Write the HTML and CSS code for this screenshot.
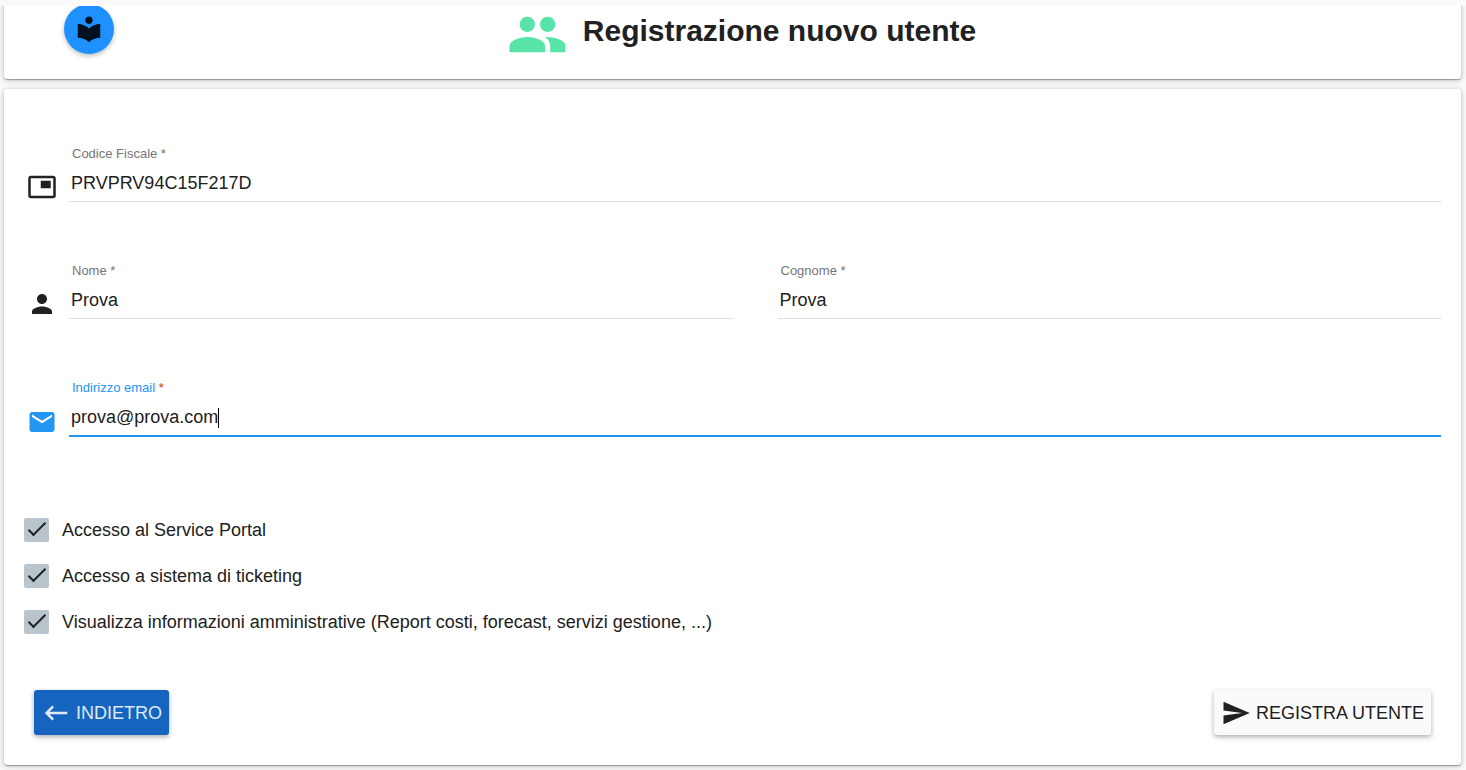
FILE: index.html
```html
<!DOCTYPE html>
<html lang="it">
<head>
<meta charset="utf-8">
<meta name="viewport" content="width=device-width, initial-scale=1">
<title>Registrazione nuovo utente</title>
<link rel="stylesheet" href="styles.css">
</head>
<body>
<div class="page">
  <header class="card toolbar">
    <button class="fab" type="button" aria-label="Manuale">
      <svg class="icon" viewBox="0 0 24 24" aria-hidden="true"><path d="M12 11.55C9.64 9.35 6.48 8 3 8v11c3.48 0 6.64 1.35 9 3.55 2.36-2.19 5.52-3.55 9-3.55V8c-3.48 0-6.64 1.35-9 3.55zM12 8c1.66 0 3-1.34 3-3s-1.34-3-3-3-3 1.34-3 3 1.34 3 3 3z"/></svg>
    </button>
    <div class="heading">
      <svg class="people" viewBox="0 0 24 24" aria-hidden="true"><path d="M16 11c1.66 0 3-1.34 3-3s-1.34-3-3-3-3 1.34-3 3 1.34 3 3 3zM8 11c1.66 0 3-1.34 3-3S9.66 5 8 5 5 6.34 5 8s1.34 3 3 3zM8 13c-2.33 0-7 1.17-7 3.5V19h14v-2.5c0-2.33-4.67-3.5-7-3.5zM16 13c-.29 0-.62.02-.97.05 1.16.84 1.97 1.97 1.97 3.45V19h6v-2.5c0-2.33-4.67-3.5-7-3.5z"/></svg>
      <h1 class="title">Registrazione nuovo utente</h1>
    </div>
  </header>

  <form class="card form">
    <div class="fields">
      <div class="row">
        <svg class="icon" viewBox="0 0 24 24" aria-hidden="true"><path d="M19 7h-8v6h8V7zm2-4H3c-1.1 0-2 .9-2 2v14c0 1.1.9 1.98 2 1.98h18c1.1 0 2-.88 2-1.98V5c0-1.1-.9-2-2-2zm0 16.01H3V4.98h18v14.03z"/></svg>
        <div class="field">
          <label class="label" for="cf">Codice Fiscale *</label>
          <input class="input" id="cf" type="text" value="PRVPRV94C15F217D" required>
        </div>
      </div>
      <div class="row">
        <svg class="icon" viewBox="0 0 24 24" aria-hidden="true"><path d="M12 12c2.21 0 4-1.79 4-4s-1.79-4-4-4-4 1.79-4 4 1.79 4 4 4zm0 2c-2.67 0-8 1.34-8 4v2h16v-2c0-2.66-5.33-4-8-4z"/></svg>
        <div class="field">
          <label class="label" for="nome">Nome *</label>
          <input class="input" id="nome" type="text" value="Prova" required>
        </div>
        <div class="field field-next">
          <label class="label" for="cognome">Cognome *</label>
          <input class="input" id="cognome" type="text" value="Prova" required>
        </div>
      </div>
      <div class="row active">
        <svg class="icon" viewBox="0 0 24 24" aria-hidden="true"><path d="M20 4H4c-1.1 0-1.99.9-1.99 2L2 18c0 1.1.9 2 2 2h16c1.1 0 2-.9 2-2V6c0-1.1-.9-2-2-2zm0 4l-8 5-8-5V6l8 5 8-5v2z"/></svg>
        <div class="field">
          <label class="label" for="email">Indirizzo email <span class="required">*</span></label>
          <input class="input" id="email" type="email" value="prova@prova.com" required>
          <span class="caret"></span>
        </div>
      </div>
    </div>

    <div class="checks">
      <label class="check"><input class="box" type="checkbox" checked>Accesso al Service Portal</label>
      <label class="check"><input class="box" type="checkbox" checked>Accesso a sistema di ticketing</label>
      <label class="check"><input class="box" type="checkbox" checked>Visualizza informazioni amministrative (Report costi, forecast, servizi gestione, ...)</label>
    </div>

    <div class="actions">
      <button class="button primary" type="button">
        <svg class="icon" viewBox="0 0 24 24" aria-hidden="true"><path d="M21 11H6.83l3.58-3.59L9 6l-6 6 6 6 1.41-1.41L6.83 13H21z"/></svg>
        INDIETRO
      </button>
      <button class="button" type="submit">
        <svg class="icon" viewBox="0 0 24 24" aria-hidden="true"><path d="M2.01 21L23 12 2.01 3 2 10l15 2-15 2z"/></svg>
        REGISTRA UTENTE
      </button>
    </div>
  </form>
</div>
</body>
</html>
```
FILE: styles.css
```css
*,
*::before {
  box-sizing: border-box;
}

body {
  margin: 0;
  background: #fafafa;
  color: #212121;
  font: 18px/24px "Liberation Sans", Arial, sans-serif;
}

.page {
  display: flex;
  flex-direction: column;
  gap: 10px;
  margin-top: 6px;
  padding: 0 5px 5px 4px;
  overflow: hidden;
}

.card {
  background: #fff;
  border-radius: 3px;
  box-shadow: 0 1px 1px rgba(0, 0, 0, 0.3), 0 1px 6px rgba(0, 0, 0, 0.25);
}

.icon {
  display: block;
  flex: none;
  width: 30px;
  height: 30px;
  fill: currentColor;
}

.toolbar {
  display: grid;
  grid-template-columns: 170px 1fr 152px;
  align-items: start;
  margin-top: -10px;
  padding: 8px 0 21px;
}

.fab {
  display: grid;
  place-items: center;
  width: 50px;
  height: 50px;
  margin: 0 0 0 60px;
  padding: 0;
  border: 0;
  border-radius: 50%;
  background: #1e90ff;
  color: #03111f;
  box-shadow: 0 2px 5px rgba(0, 0, 0, 0.26);
}

.heading {
  display: flex;
  align-items: center;
  justify-content: center;
  gap: 15px;
}

.people {
  width: 61px;
  height: 61px;
  margin-bottom: -7px;
  fill: #58e3a9;
}

.title {
  margin: 0;
  font-size: 30px;
  line-height: 40px;
}

.form {
  padding: 57px 20px 30px;
}

.fields {
  display: grid;
  gap: 61px;
}

.row {
  display: flex;
  align-items: flex-end;
  padding-left: 3px;
}

.field {
  position: relative;
  flex: 1;
  min-width: 0;
  margin-left: 12px;
}

.field-next {
  margin-left: 45px;
}

.label {
  display: block;
  padding-left: 3px;
  color: #757575;
  font-size: 13px;
  line-height: 16px;
}

.input {
  display: block;
  width: 100%;
  height: 40px;
  padding: 4px 2px 0;
  border: 0;
  border-bottom: 1px solid #e0e0e0;
  outline: 0;
  background: none;
  color: inherit;
  font: inherit;
}

.active .icon,
.active .label {
  color: #2196f3;
}

.active .input {
  height: 41px;
  border-bottom: 2px solid #2196f3;
}

.label .required {
  color: #dd2c00;
}

.caret {
  position: absolute;
  left: 149px;
  bottom: 9px;
  width: 1px;
  height: 20px;
  background: #000;
}

.checks {
  display: grid;
  gap: 22px;
  margin-top: 81px;
}

.check {
  display: flex;
  align-items: center;
  gap: 13px;
}

.box {
  display: grid;
  flex: none;
  width: 25px;
  height: 24px;
  margin: 0;
  border-radius: 2px;
  background: #b8c5cd;
  appearance: none;
}

.box:checked::before {
  content: "";
  align-self: center;
  justify-self: center;
  width: 18px;
  height: 8px;
  margin-bottom: 6px;
  border: solid #212121;
  border-width: 0 0 2px 2px;
  transform: rotate(-45deg);
}

.actions {
  display: flex;
  justify-content: space-between;
  margin-top: 56px;
  padding: 0 10px;
}

.button {
  display: flex;
  align-items: center;
  gap: 5px;
  height: 45px;
  padding: 0 7px;
  border: 0;
  border-radius: 3px;
  background: #fafafa;
  color: #212121;
  font: inherit;
  box-shadow: 0 2px 5px rgba(0, 0, 0, 0.32);
}

.primary {
  background: #1565c0;
  color: #dfe9f6;
}
```
